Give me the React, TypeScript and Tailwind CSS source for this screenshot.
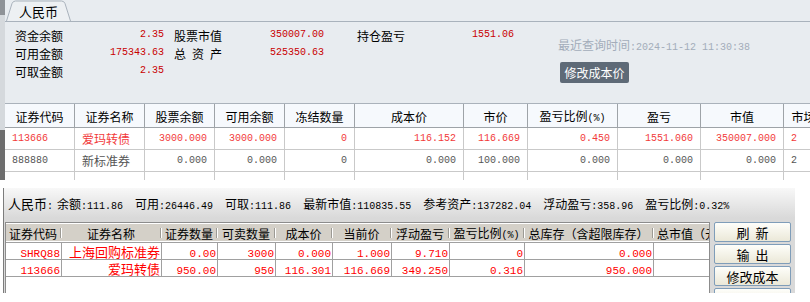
import React from "react";

const CJK = "font-['Noto_Sans_CJK_SC',sans-serif]";
const MONO = "font-['Liberation_Mono','Noto_Sans_CJK_SC',monospace]";

// split a label into ascii runs (mono) and CJK runs, kept on one baseline
function Mixed({
  text,
  cjk = "text-[12px]",
  mono = "text-[10px]",
}: {
  text: string;
  cjk?: string;
  mono?: string;
}) {
  const parts = text.match(/[\x20-\x7e]+|[^\x20-\x7e]+/g) ?? [];
  return (
    <span className="whitespace-pre">
      {parts.map((p, i) =>
        /^[\x20-\x7e]+$/.test(p) ? (
          <span key={i} className={`${MONO} ${mono}`}>
            {p}
          </span>
        ) : (
          <span key={i} className={`${CJK} ${cjk}`}>
            {p}
          </span>
        )
      )}
    </span>
  );
}

type Col = { title: string; w: number; right: boolean };

const TOP_COLS: Col[] = [
  { title: "证券代码", w: 70, right: false },
  { title: "证券名称", w: 70, right: false },
  { title: "股票余额", w: 70, right: true },
  { title: "可用余额", w: 70, right: true },
  { title: "冻结数量", w: 70, right: true },
  { title: "成本价", w: 109, right: true },
  { title: "市价", w: 64, right: true },
  { title: "盈亏比例(%)", w: 90, right: true },
  { title: "盈亏", w: 83, right: true },
  { title: "市值", w: 83, right: true },
  { title: "市场", w: 40, right: false },
];

const TOP_ROWS = [
  {
    color: "text-[#f23a3a]",
    cells: ["113666", "爱玛转债", "3000.000", "3000.000", "0", "116.152", "116.669", "0.450", "1551.060", "350007.000", "2"],
  },
  {
    color: "text-[#555555]",
    cells: ["888880", "新标准券", "0.000", "0.000", "0", "0.000", "100.000", "0.000", "0.000", "0.000", "2"],
  },
  { color: "text-[#555555]", cells: ["", "", "", "", "", "", "", "", "", "", ""] },
];

const BOTTOM_COLS = [
  { title: "证券代码", w: 56 },
  { title: "证券名称", w: 100 },
  { title: "证券数量", w: 56 },
  { title: "可卖数量", w: 58 },
  { title: "成本价", w: 57 },
  { title: "当前价", w: 59 },
  { title: "浮动盈亏", w: 58 },
  { title: "盈亏比例(%)", w: 75 },
  { title: "总库存（含超限库存）", w: 129 },
  { title: "总市值（元）", w: 80 },
];

const BOTTOM_ROWS = [
  ["SHRQ88", "上海回购标准券", "0.00", "3000", "0.000", "1.000", "9.710", "0", "0.000", ""],
  ["113666", "爱玛转债", "950.00", "950", "116.301", "116.669", "349.250", "0.316", "950.000", ""],
];

const SUMMARY = [
  "余额:111.86",
  "可用:26446.49",
  "可取:111.86",
  "最新市值:110835.55",
  "参考资产:137282.04",
  "浮动盈亏:358.96",
  "盈亏比例:0.32%",
];

function InfoLabel({ text }: { text: string }) {
  return (
    <div className="flex items-center text-black">
      <Mixed text={text} />
    </div>
  );
}

function InfoValue({ text, right }: { text: string; right?: boolean }) {
  return (
    <div className={`flex items-center ${right ? "justify-end" : ""}`}>
      <span className={`${MONO} text-[10px] text-[#c80000]`}>{text}</span>
    </div>
  );
}

export default function App() {
  return (
    <div className="h-[302px] w-[810px] overflow-hidden bg-white leading-none">
      {/* upper account panel */}
      <div className="flex h-[180px] bg-[#e8ecf0]">
        <div className="flex w-[5px] shrink-0 flex-col">
          <div className="h-[15px] bg-[#8e9297]" />
          <div className="h-[115px] bg-[#d5d9dd]" />
          <div className="flex-1 bg-[#6e6e6e]" />
        </div>

        <div className="flex min-w-0 flex-1 flex-col">
          {/* tab strip */}
          <div className="flex h-[22px] border-b border-[#a9b2bc]">
            <div className="relative ml-[1px] flex h-[21px] w-[65px] items-center justify-center">
              <svg className="absolute inset-0" width="65" height="21" viewBox="0 0 65 21">
                <path
                  d="M0.5 21 L6 3.5 Q7 1 9.5 1 L55.5 1 Q58 1 59 3.5 L64.5 21"
                  fill="#edf0f3"
                  stroke="#a9b2bc"
                  strokeWidth="1"
                />
              </svg>
              <span className={`${CJK} relative mt-[1px] text-[13px] text-black`}>人民币</span>
            </div>
          </div>

          {/* balances */}
          <div className="flex h-[81px]">
            <div className="grid w-[553px] shrink-0 grid-cols-[60px_89px_106px_87px_115px_86px] auto-rows-[18px] pl-[10px] pt-[4px]">
              <InfoLabel text="资金余额" />
              <InfoValue text="2.35" right />
              <div className="flex pl-[10px]">
                <InfoLabel text="股票市值" />
              </div>
              <InfoValue text="350007.00" />
              <InfoLabel text="持仓盈亏" />
              <InfoValue text="1551.06" />

              <InfoLabel text="可用金额" />
              <InfoValue text="175343.63" right />
              <div className="flex pl-[10px]">
                <InfoLabel text="总 资 产" />
              </div>
              <InfoValue text="525350.63" />
              <div />
              <div />

              <InfoLabel text="可取金额" />
              <InfoValue text="2.35" right />
            </div>

            <div className="flex flex-col pt-[15px]">
              <div className="flex h-[14px] items-center text-[#a3adba]">
                <Mixed text="最近查询时间:2024-11-12 11:30:38" />
              </div>
              <div className="ml-[2px] mt-[11px] flex h-[21px] w-[69px] items-center justify-center rounded-[2px] bg-[#5e6a77]">
                <span className={`${CJK} text-[12px] text-white`}>修改成本价</span>
              </div>
            </div>
          </div>

          {/* positions grid */}
          <div className="min-h-0 flex-1 overflow-hidden border-t border-[#aab2bb]">
            <div className="flex h-[24px] w-[819px] bg-[#f6f9fd]">
              {TOP_COLS.map((c) => (
                <div
                  key={c.title}
                  style={{ width: c.w }}
                  className="flex shrink-0 items-center justify-center border-r border-b border-[#9ea3a8] text-black"
                >
                  <Mixed text={c.title} />
                </div>
              ))}
            </div>
            {TOP_ROWS.map((r, ri) => (
              <div key={ri} className={`flex h-[22px] w-[819px] bg-white ${r.color}`}>
                {r.cells.map((v, ci) => {
                  const c = TOP_COLS[ci];
                  return (
                    <div
                      key={ci}
                      style={{ width: c.w }}
                      className={`flex shrink-0 items-center border-r border-b border-[#c9c9c9] px-[7px] ${
                        c.right ? "justify-end" : "justify-start"
                      }`}
                    >
                      {ci === 1 ? (
                        <span className={`${CJK} text-[12px]`}>{v}</span>
                      ) : (
                        <span className={`${MONO} text-[10px]`}>{v}</span>
                      )}
                    </div>
                  );
                })}
              </div>
            ))}
          </div>
        </div>
      </div>

      <div className="h-[8px]" />

      {/* lower account panel */}
      <div className="ml-[3px] flex h-[105px] w-[792px] flex-col overflow-hidden border-l border-[#7c7c7c] bg-[#d9d9d9]">
        <div className="flex h-[30px] shrink-0 items-center bg-gradient-to-b from-[#f8f8f8] to-[#d9d9d9] pl-[4px] text-black">
          <div className="mr-[4px] flex items-center">
            <Mixed text="人民币:" cjk="text-[13px]" />
          </div>
          <div className="flex items-center gap-[12px]">
            {SUMMARY.map((s) => (
              <div key={s} className="flex items-center">
                <Mixed text={s} cjk="text-[12px]" />
              </div>
            ))}
          </div>
        </div>

        <div className="flex min-h-0 flex-1 gap-[4px] pl-[1px] pt-[4px]">
          <div className="h-full w-[705px] shrink-0 overflow-hidden border border-b-0 border-[#8c8c8c] bg-white pt-[1px]">
            <div className="flex h-[17px] w-[760px] bg-[#d4d0c8]">
              {BOTTOM_COLS.map((c) => (
                <div key={c.title} style={{ width: c.w }} className="flex shrink-0 items-center">
                  <div className="flex flex-1 justify-center whitespace-nowrap text-black">
                    <Mixed text={c.title} />
                  </div>
                  <div className="h-[10px] w-[2px] border-l border-r border-l-[#9c9a94] border-r-white" />
                </div>
              ))}
            </div>
            <div className="mt-[1px] border-t border-[#a0a0a0]">
              {BOTTOM_ROWS.map((r, ri) => (
                <div key={ri} className="flex h-[17px] w-[760px] overflow-hidden text-[#ff0000]">
                  {r.map((v, ci) => (
                    <div
                      key={ci}
                      style={{ width: BOTTOM_COLS[ci].w }}
                      className="flex shrink-0 items-center justify-end border-r border-b border-[#a0a0a0] pr-[1px]"
                    >
                      <Mixed text={v} cjk="text-[13px]" mono="text-[11px]" />
                    </div>
                  ))}
                </div>
              ))}
            </div>
          </div>

          <div className="flex w-[77px] shrink-0 flex-col gap-[2px]">
            {["刷 新", "输 出", "修改成本", ""].map((b, i) => (
              <div
                key={i}
                className="flex h-[20px] shrink-0 items-center justify-center rounded-[2px] border border-[#7f9db9] bg-gradient-to-b from-[#fefefa] to-[#ebe8d8] text-black"
              >
                <Mixed text={b} cjk="text-[13px]" mono="text-[10px]" />
              </div>
            ))}
          </div>
        </div>
      </div>
    </div>
  );
}
